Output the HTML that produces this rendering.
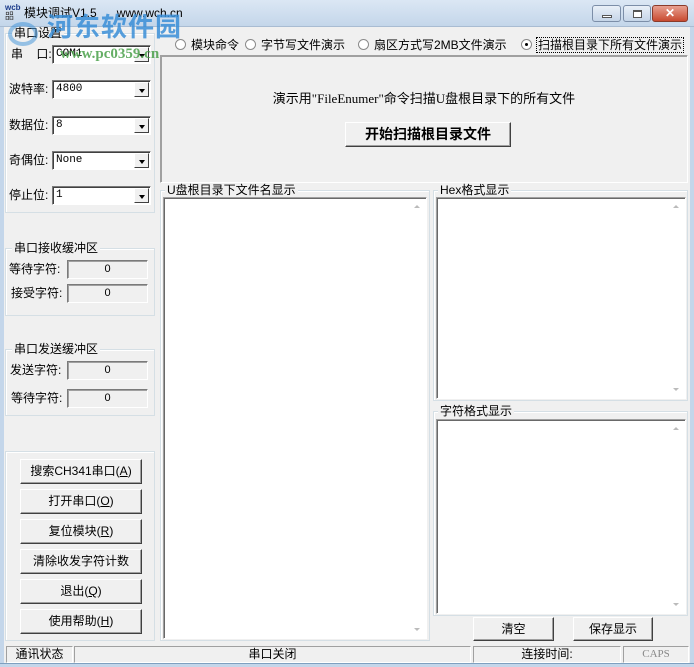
<!DOCTYPE html>
<html><head><meta charset="utf-8"><style>
*{margin:0;padding:0;box-sizing:border-box}
body{width:694px;height:667px;overflow:hidden;background:#f0f0f0;font-family:"Liberation Sans","Noto Sans CJK SC",sans-serif;font-size:12px;color:#000;position:relative}
.a{position:absolute}
.t{white-space:nowrap;line-height:1}
.grp{position:absolute;border:1px solid #d5dfe5;box-shadow:inset 1px 1px 0 #fff}
.grp>span{position:absolute;top:-7px;left:6px;background:#f0f0f0;padding:0 2px;line-height:13px;white-space:nowrap}
.combo{position:absolute;background:#fff;border:1px solid;border-color:#7a7a7a #fff #fff #7a7a7a;box-shadow:inset 1px 1px 0 #404040;font-family:"Liberation Mono","Noto Sans CJK SC",monospace;font-size:11px;padding:3px 3px;line-height:11px}
.combo i{position:absolute;right:1px;top:1px;bottom:1px;width:15px;background:#f0f0f0;border:1px solid;border-color:#fff #404040 #404040 #fff}
.combo i:after{content:"";position:absolute;left:4px;top:6px;border:3px solid transparent;border-top:4px solid #000;border-bottom:0}
.fld{position:absolute;background:#f0f0f0;border:1px solid;border-color:#7a7a7a #fff #fff #7a7a7a;box-shadow:inset 1px 1px 0 #a0a0a0;text-align:center;font-size:11px;line-height:16px}
.btn{position:absolute;background:#f0f0f0;border:1px solid;border-color:#fff #404040 #404040 #fff;box-shadow:inset -1px -1px 0 #a0a0a0;text-align:center;line-height:22px;font-size:12px;white-space:nowrap}
.box{position:absolute;background:#fff;border:1px solid;border-color:#a0a0a0 #fff #fff #a0a0a0;box-shadow:inset 1px 1px 0 #696969}
.sb{position:absolute;right:1px;top:1px;bottom:1px;width:16px;background:#fff}
.sb:before,.sb:after{content:"";position:absolute;left:5px;border:3px solid transparent}
.sb:before{top:6px;border-bottom:3px solid #bbb;border-top:0}
.sb:after{bottom:6px;border-top:3px solid #bbb;border-bottom:0}
.rad{position:absolute;width:11px;height:11px;border-radius:50%;border:1px solid #8a8a8a;background:#fff}
.rad.on:after{content:"";position:absolute;left:3px;top:3px;width:3px;height:3px;background:#000;border-radius:50%}
.pane{position:absolute;top:646px;height:17px;border:1px solid;border-color:#a0a0a0 #fff #fff #a0a0a0;line-height:15px;font-size:12px;text-align:center;white-space:nowrap}
</style></head><body>
<div class="a" style="left:0;top:0;width:694px;height:27px;background:linear-gradient(#dbe7f4,#c4d6ea);border-bottom:1px solid #a9bcd2"></div>
<div class="a" style="left:0;top:27px;width:4px;height:640px;background:#c4d6ea"></div>
<div class="a" style="left:690px;top:27px;width:4px;height:640px;background:#c4d6ea"></div>
<div class="a" style="left:0;top:663px;width:694px;height:4px;background:#c4d6ea;border-top:1px solid #7fa0c0"></div>
<div class="a t" style="left:5px;top:4px;font-size:8px;color:#1a3a8a;font-weight:bold">wcb</div>
<div class="a t" style="left:5px;top:12px;font-size:9px;color:#333">㗊</div>
<div class="a t" style="left:24px;top:7px;font-size:12px">模块调试V1.5&nbsp;&nbsp;&nbsp;&nbsp;&nbsp;&nbsp;www.wch.cn</div>
<div class="a" style="left:592px;top:5px;width:29px;height:17px;border:1px solid #7c8ea8;border-radius:3px;background:linear-gradient(#e9f0f8,#c5d5e8)"><div class="a" style="left:9px;top:9px;width:10px;height:3px;border:1px solid #555;background:#fff"></div></div>
<div class="a" style="left:623px;top:5px;width:28px;height:17px;border:1px solid #7c8ea8;border-radius:3px;background:linear-gradient(#e9f0f8,#c5d5e8)"><div class="a" style="left:9px;top:4px;width:9px;height:8px;border:1px solid #555;border-top-width:2px;background:#fff"></div></div>
<div class="a" style="left:652px;top:5px;width:36px;height:17px;border:1px solid #8a3a2a;border-radius:3px;background:linear-gradient(#e8a090,#c84a30);color:#fff;font-weight:bold;text-align:center;line-height:15px;font-size:12px">✕</div>

<div class="grp" style="left:5px;top:33px;width:150px;height:180px"><span>串口设置</span></div>
<div class="a t" style="left:11px;top:48px">串&nbsp;&nbsp;&nbsp;&nbsp;口:</div>
<div class="combo" style="left:52px;top:45px;width:99px;height:19px">COM1<i></i></div>
<div class="a t" style="left:9px;top:83px">波特率:</div>
<div class="combo" style="left:52px;top:80px;width:99px;height:19px">4800<i></i></div>
<div class="a t" style="left:9px;top:119px">数据位:</div>
<div class="combo" style="left:52px;top:116px;width:99px;height:19px">8<i></i></div>
<div class="a t" style="left:9px;top:154px">奇偶位:</div>
<div class="combo" style="left:52px;top:151px;width:99px;height:19px">None<i></i></div>
<div class="a t" style="left:9px;top:189px">停止位:</div>
<div class="combo" style="left:52px;top:186px;width:99px;height:19px">1<i></i></div>

<div class="grp" style="left:5px;top:248px;width:150px;height:68px"><span>串口接收缓冲区</span></div>
<div class="a t" style="left:9px;top:263px">等待字符:</div>
<div class="fld" style="left:67px;top:260px;width:81px;height:19px">0</div>
<div class="a t" style="left:11px;top:287px">接受字符:</div>
<div class="fld" style="left:67px;top:284px;width:81px;height:19px">0</div>

<div class="grp" style="left:5px;top:349px;width:150px;height:67px"><span>串口发送缓冲区</span></div>
<div class="a t" style="left:10px;top:364px">发送字符:</div>
<div class="fld" style="left:67px;top:361px;width:81px;height:19px">0</div>
<div class="a t" style="left:11px;top:392px">等待字符:</div>
<div class="fld" style="left:67px;top:389px;width:81px;height:19px">0</div>

<div class="grp" style="left:5px;top:451px;width:150px;height:190px"></div>
<div class="btn" style="left:20px;top:459px;width:122px;height:25px">搜索CH341串口(<u>A</u>)</div>
<div class="btn" style="left:20px;top:489px;width:122px;height:25px">打开串口(<u>O</u>)</div>
<div class="btn" style="left:20px;top:519px;width:122px;height:25px">复位模块(<u>R</u>)</div>
<div class="btn" style="left:20px;top:549px;width:122px;height:25px">清除收发字符计数</div>
<div class="btn" style="left:20px;top:579px;width:122px;height:25px">退出(<u>Q</u>)</div>
<div class="btn" style="left:20px;top:609px;width:122px;height:25px">使用帮助(<u>H</u>)</div>

<div class="rad" style="left:175px;top:39px"></div><div class="a t" style="left:191px;top:39px">模块命令</div>
<div class="rad" style="left:245px;top:39px"></div><div class="a t" style="left:261px;top:39px">字节写文件演示</div>
<div class="rad" style="left:358px;top:39px"></div><div class="a t" style="left:374px;top:39px">扇区方式写2MB文件演示</div>
<div class="rad on" style="left:521px;top:39px"></div><div class="a t" style="left:536px;top:37px;border:1px dotted #000;padding:1px 1px">扫描根目录下所有文件演示</div>

<div class="a" style="left:160px;top:55px;width:528px;height:128px;border:1px solid;border-color:#a0a0a0 #fff #fff #a0a0a0;box-shadow:1px 1px 0 #a0a0a0 inset"></div>
<div class="a t" style="left:160px;width:528px;text-align:center;top:92px;font-size:13px;font-family:'Liberation Serif','Noto Sans CJK SC',serif">演示用"FileEnumer"命令扫描U盘根目录下的所有文件</div>
<div class="btn" style="left:345px;top:122px;width:166px;height:25px;font-weight:bold;font-size:14px;line-height:23px">开始扫描根目录文件</div>

<div class="grp" style="left:160px;top:190px;width:270px;height:451px"><span style="left:4px">U盘根目录下文件名显示</span></div>
<div class="box" style="left:163px;top:197px;width:264px;height:442px"><div class="sb"></div></div>
<div class="grp" style="left:433px;top:190px;width:255px;height:211px"><span style="left:4px">Hex格式显示</span></div>
<div class="box" style="left:436px;top:197px;width:250px;height:202px"><div class="sb"></div></div>
<div class="grp" style="left:433px;top:411px;width:255px;height:205px"><span style="left:4px">字符格式显示</span></div>
<div class="box" style="left:436px;top:419px;width:250px;height:195px"><div class="sb"></div></div>
<div class="btn" style="left:473px;top:617px;width:81px;height:24px">清空</div>
<div class="btn" style="left:573px;top:617px;width:80px;height:24px">保存显示</div>

<div class="pane" style="left:6px;width:67px">通讯状态</div>
<div class="pane" style="left:74px;width:397px">串口关闭</div>
<div class="pane" style="left:473px;width:148px">连接时间:</div>
<div class="pane" style="left:623px;width:66px;color:#888;font-family:'Liberation Serif',serif;font-size:11px">CAPS</div>

<div class="a t" style="left:47px;top:14px;font-size:26px;font-weight:bold;color:#3a8fd8;opacity:.85;letter-spacing:1px">河东软件园</div>
<div class="a t" style="left:60px;top:47px;font-size:15px;font-weight:bold;color:#4aa04a;opacity:.85;font-family:'Liberation Serif',serif">www.pc0359.cn</div>
<div class="a" style="left:8px;top:22px;width:30px;height:24px;border-radius:50%;border:4px solid #3a8fd8;opacity:.5"></div>
</body></html>
